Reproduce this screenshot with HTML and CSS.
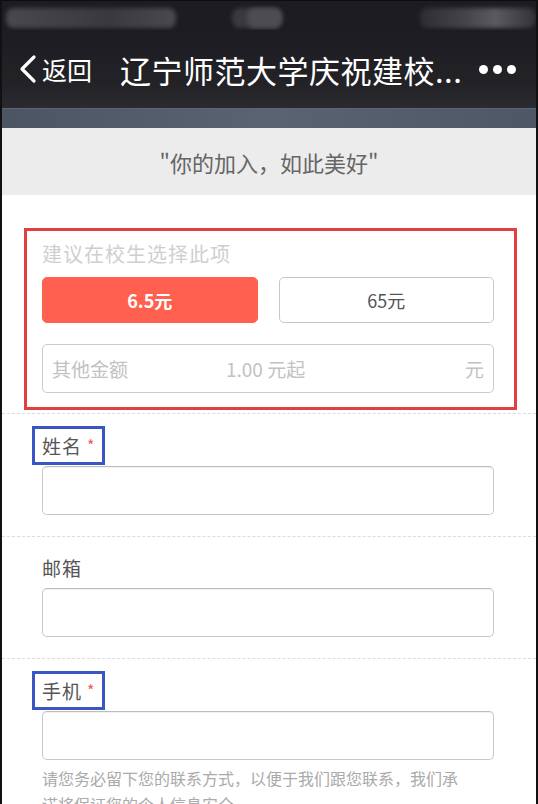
FILE: index.html
```html
<!DOCTYPE html>
<html lang="zh-CN">
<head>
  <meta charset="UTF-8">
  <meta name="viewport" content="width=device-width, initial-scale=1.0">
  <title>辽宁师范大学庆祝建校</title>
  <link rel="stylesheet" href="styles.css">
</head>
<body>
  <div class="screen">
    <div class="statusbar">
      <span class="blur b1"></span>
      <span class="blur b2"></span>
      <span class="blur b3"></span>
      <span class="blur b4"></span>
    </div>

    <div class="navbar">
      <div class="back">
        <svg width="20" height="30" viewBox="0 0 20 30">
          <path d="M16 3 L4 15 L16 27" fill="none" stroke="#fff" stroke-width="3.2" stroke-linecap="round" stroke-linejoin="round"/>
        </svg>
        <span>返回</span>
      </div>
      <div class="title">辽宁师范大学庆祝建校...</div>
      <div class="more"><i></i><i></i><i></i></div>
    </div>
    <div class="strip"></div>

    <div class="banner">"你的加入，如此美好"</div>

    <div class="form">
      <div class="section first">
        <div class="amountBox">
          <div class="hint">建议在校生选择此项</div>
          <div class="choices">
            <button class="choice active">6.5元</button>
            <button class="choice">65元</button>
          </div>
          <div class="other">
            <span class="otherLabel">其他金额</span>
            <span class="otherMin">1.00 元起</span>
            <span class="unit">元</span>
          </div>
        </div>
      </div>

      <div class="section">
        <div class="label marked">姓名<em>*</em></div>
        <div class="input"></div>
      </div>

      <div class="section">
        <div class="label">邮箱</div>
        <div class="input"></div>
      </div>

      <div class="section">
        <div class="label marked">手机<em>*</em></div>
        <div class="input"></div>
        <p class="note">请您务必留下您的联系方式，以便于我们跟您联系，我们承诺将保证您的个人信息安全。</p>
      </div>
    </div>
  </div>
</body>
</html>
```

FILE: styles.css
```css
html, body {
  margin: 0;
  padding: 0;
  height: 100%;
  overflow: hidden;
  background: #fff;
}

.screen {
  height: 804px;
  overflow: hidden;
  border-left: 2px solid #111;
  border-right: 2px solid #111;
  font-family: "Noto Sans CJK SC", "Noto Sans", sans-serif;
  background: #fff;
}

.statusbar {
  height: 30px;
  background: #1d1c22;
  border-top: 1px solid #0d0d10;
  box-sizing: border-box;
  position: relative;
  overflow: hidden;
}

.blur {
  position: absolute;
  top: 7px;
  height: 20px;
  border-radius: 8px;
  filter: blur(2px);
}
.b1 { left: 4px; width: 170px; background: linear-gradient(90deg, #49484d, #3a393f 60%, #4a494d); }
.b2 { left: 230px; width: 50px; background: #3a393e; }
.b3 { left: 245px; width: 35px; background: #4d4c51; }
.b4 { left: 418px; width: 116px; background: linear-gradient(90deg, #2e2d33, #46454a 40%, #5b5a5f 65%, #333238); }

.navbar {
  height: 78px;
  background: linear-gradient(#1d1c22, #232227 70%, #2a2a30);
  display: flex;
  align-items: center;
  color: #fff;
  padding: 0 20px 0 16px;
}

.back {
  display: flex;
  align-items: center;
  gap: 4px;
  font-size: 25px;
  width: 102px;
}
.back svg {
  display: block;
}

.title {
  flex: 1;
  font-size: 31px;
  letter-spacing: 0.5px;
  white-space: nowrap;
}

.more {
  display: flex;
  gap: 5px;
}
.more i {
  width: 9px;
  height: 9px;
  border-radius: 50%;
  background: #fff;
}

.strip {
  height: 20px;
  background: linear-gradient(90deg, #4c5564, #5a6371 50%, #4e5766);
  border-top: 1px solid #5d6570;
  box-sizing: border-box;
}

.banner {
  height: 67px;
  background: #ececec;
  color: #666;
  font-size: 22px;
  display: flex;
  align-items: center;
  justify-content: center;
}

.form {
  padding: 0 42px 0 40px;
}

.section {
  border-top: 1px dashed #dcdcdc;
  margin: 0 -42px 0 -40px;
  padding: 12px 42px 21px 40px;
}
.section.first {
  border-top: none;
  padding-top: 33px;
  padding-bottom: 3px;
}

.amountBox {
  border: 3px solid #e2403e;
  margin: 0 -23px 0 -18px;
  padding: 8px 20px 14px 15px;
}

.hint {
  color: #cfcfcf;
  font-size: 20px;
  letter-spacing: 1px;
  line-height: 30px;
}

.choices {
  display: flex;
  gap: 21px;
  margin-top: 8px;
}

.choice {
  flex: 1;
  height: 46px;
  border: 1px solid #c8c8c8;
  border-radius: 5px;
  background: #fff;
  color: #555;
  font-family: "Noto Sans CJK SC", "Noto Sans", sans-serif;
  font-size: 18px;
  padding: 0;
}
.choice.active {
  background: #ff604f;
  border-color: #ff604f;
  color: #fff;
  font-weight: bold;
}

.other {
  margin-top: 21px;
  height: 49px;
  box-sizing: border-box;
  border: 1px solid #cbcbcb;
  border-radius: 5px;
  display: flex;
  align-items: center;
  padding: 0 9px;
  color: #c2c2c2;
  font-size: 19px;
}
.otherLabel {
  width: 174px;
}
.otherMin {
  flex: 1;
}

.label {
  display: inline-block;
  color: #555;
  font-size: 19px;
  letter-spacing: 1px;
  line-height: 26px;
  padding: 3px 6px 3px 7px;
  margin-left: -10px;
  border: 3px solid transparent;
}
.label.marked {
  border-color: #3a56c4;
}
.label em {
  color: #ef5a55;
  font-style: normal;
  font-size: 16px;
  margin-left: 5px;
  vertical-align: 2px;
}

.input {
  margin-top: 1px;
  height: 49px;
  box-sizing: border-box;
  border: 1px solid #c8c8c8;
  border-top-color: #bdbdbd;
  border-radius: 5px;
  box-shadow: inset 0 1px 1px rgba(0, 0, 0, 0.06);
}

.note {
  margin: 5px 0 0;
  color: #aaa;
  font-size: 16px;
  line-height: 26px;
  padding-right: 24px;
}
```
